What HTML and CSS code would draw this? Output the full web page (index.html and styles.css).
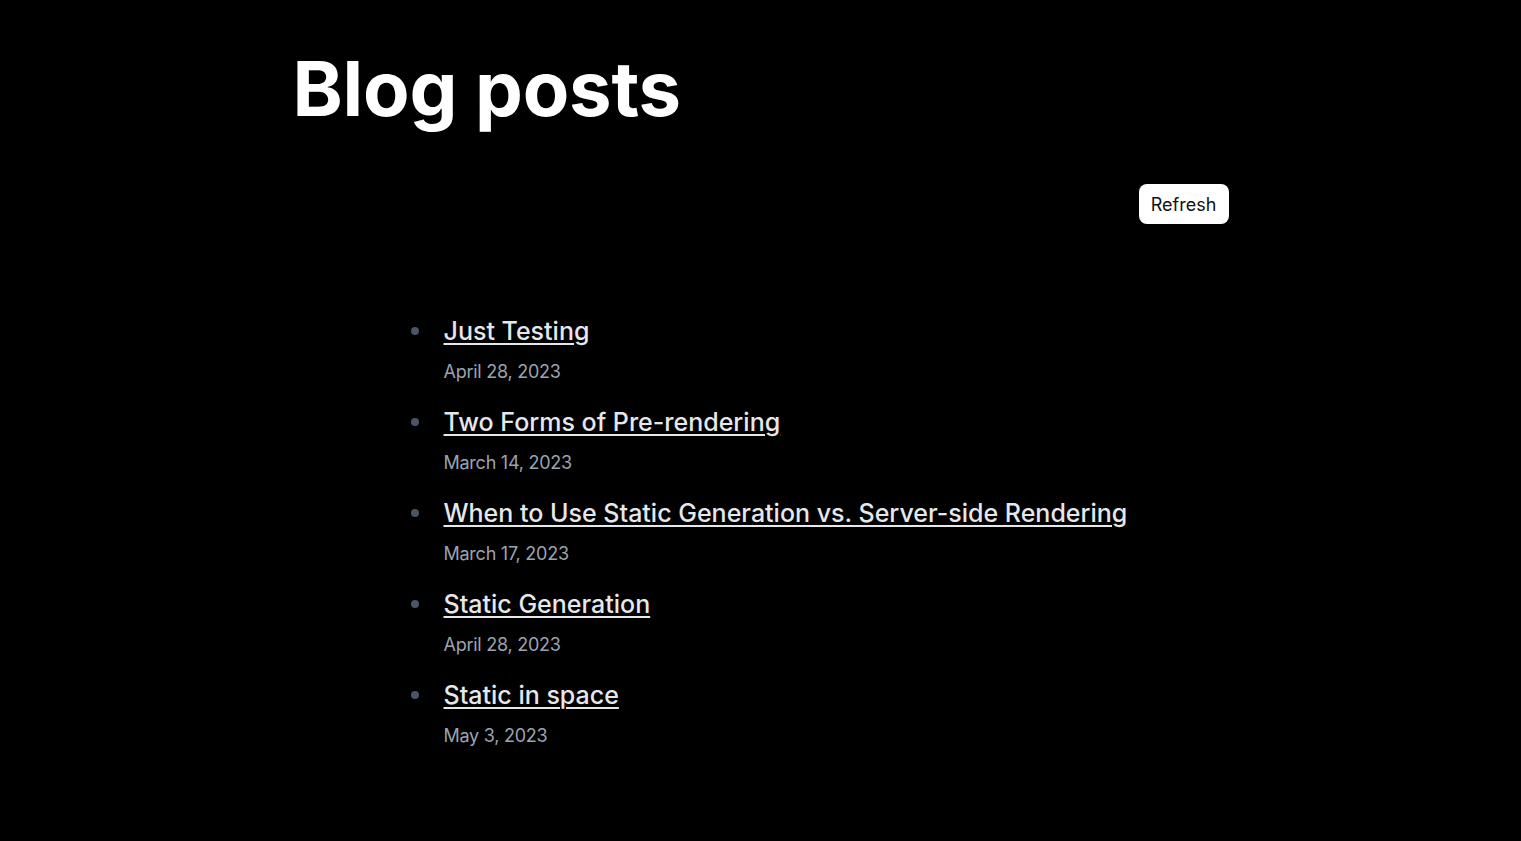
FILE: index.html
```html
<!DOCTYPE html>
<html lang="en">
<head>
<meta charset="utf-8">
<title>Blog posts</title>
<link rel="stylesheet" href="styles.css">
</head>
<body>
<main class="page">
  <h1 class="title">Blog posts</h1>
  <div class="toolbar">
    <button class="refresh">Refresh</button>
  </div>
  <ul class="posts">
    <li class="post"><div class="post-body"><a class="post-link" href="#">Just Testing</a><div class="post-date">April 28, 2023</div></div></li>
    <li class="post"><div class="post-body"><a class="post-link" href="#">Two Forms of Pre-rendering</a><div class="post-date">March 14, 2023</div></div></li>
    <li class="post"><div class="post-body"><a class="post-link" href="#">When to Use Static Generation vs. Server-side Rendering</a><div class="post-date">March 17, 2023</div></div></li>
    <li class="post"><div class="post-body"><a class="post-link" href="#">Static Generation</a><div class="post-date">April 28, 2023</div></div></li>
    <li class="post"><div class="post-body"><a class="post-link" href="#">Static in space</a><div class="post-date">May 3, 2023</div></div></li>
  </ul>
</main>
</body>
</html>
```
FILE: styles.css
```css
html, body {
  margin: 0;
  padding: 0;
  background: #000;
  color: #fff;
  font-family: Inter, "Noto Sans", sans-serif;
}
.page {
  width: 936px;
  margin: 0 auto;
  padding-top: 40px;
}
.title {
  margin: 0;
  font-size: 76px;
  font-weight: 700;
  line-height: 96px;
  letter-spacing: -0.2px;
  color: #fff;
}
.toolbar {
  display: flex;
  justify-content: flex-end;
  margin-top: 48px;
}
.refresh {
  height: 40px;
  width: 90px;
  border: none;
  border-radius: 8px;
  background: #fff;
  color: #111;
  font-family: Inter, "Noto Sans", sans-serif;
  font-size: 18px;
  cursor: pointer;
}
.posts {
  margin: 91px 0 0 0;
  padding-left: 118px;
  list-style: none;
}
.post {
  display: grid;
  grid-template-columns: 8px 1fr;
  column-gap: 25px;
  height: 91px;
}
.post::before {
  content: "";
  width: 8px;
  height: 8px;
  margin-top: 12px;
  border-radius: 50%;
  background: #4b5563;
}
.post-body {
  display: flex;
  flex-direction: column;
  align-items: flex-start;
}
.post-link {
  font-size: 25px;
  font-weight: 500;
  line-height: 32px;
  color: #e5e7eb;
  text-decoration: underline;
  text-underline-offset: 3px;
  text-decoration-thickness: 2px;
}
.post-date {
  margin-top: 11px;
  font-size: 18px;
  line-height: 28px;
  letter-spacing: -0.25px;
  color: #9ca3af;
}
```
